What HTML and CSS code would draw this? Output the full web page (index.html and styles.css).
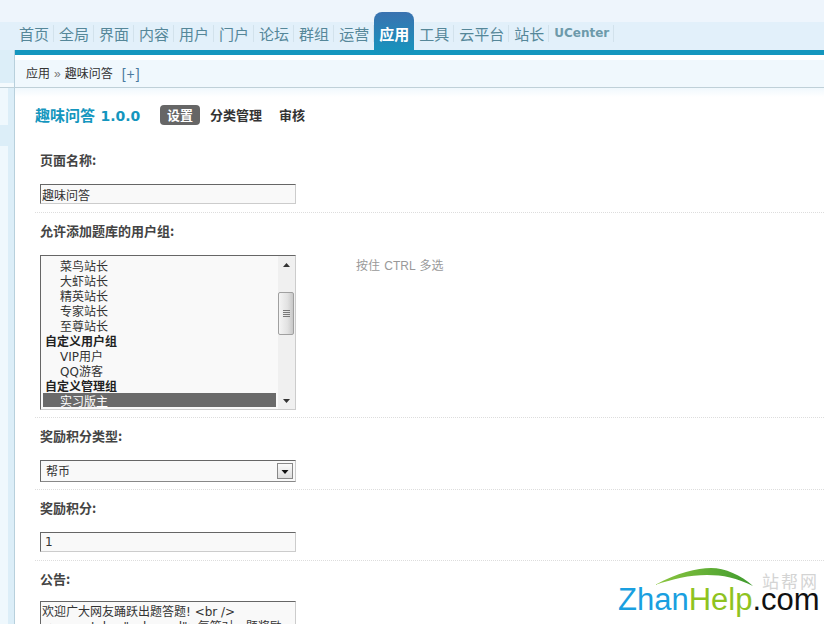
FILE: index.html
```html
<!DOCTYPE html>
<html lang="zh-CN">
<head>
<meta charset="utf-8">
<title>趣味问答</title>
<link rel="stylesheet" href="styles.css">
</head>
<body>
<header class="header">
  <ul class="nav">
    <li class="nav-item">首页</li>
    <li class="nav-item">全局</li>
    <li class="nav-item">界面</li>
    <li class="nav-item">内容</li>
    <li class="nav-item">用户</li>
    <li class="nav-item">门户</li>
    <li class="nav-item">论坛</li>
    <li class="nav-item">群组</li>
    <li class="nav-item">运营</li>
    <li class="nav-item nav-active">应用</li>
    <li class="nav-item">工具</li>
    <li class="nav-item">云平台</li>
    <li class="nav-item">站长</li>
    <li class="nav-item nav-latin">UCenter</li>
  </ul>
</header>
<div class="body-wrap">
  <aside class="side">
    <div class="side-a"></div>
    <div class="side-b"></div>
    <div class="side-line"></div>
    <div class="side-c"></div>
    <div class="side-d"></div>
    <div class="side-e"></div>
  </aside>
  <div class="main">
    <div class="bar"></div>
    <div class="crumb">
      <span>应用</span><span class="crumb-sep">»</span><span>趣味问答</span><span class="crumb-add">[+]</span>
    </div>
    <div class="fade"></div>
    <div class="title-row">
      <h1 class="title">趣味问答 <span class="version">1.0.0</span></h1>
      <div class="tabs">
        <span class="tab tab-on">设置</span>
        <span class="tab">分类管理</span>
        <span class="tab">审核</span>
      </div>
    </div>
    <form class="form">
      <div class="row">
        <div class="label">页面名称:</div>
        <input class="field" type="text" value="趣味问答">
      </div>
      <div class="row row-tight">
        <div class="label">允许添加题库的用户组:</div>
        <div class="with-hint">
          <div class="listbox">
            <div class="options">
              <div class="opt">菜鸟站长</div>
              <div class="opt">大虾站长</div>
              <div class="opt">精英站长</div>
              <div class="opt">专家站长</div>
              <div class="opt">至尊站长</div>
              <div class="group">自定义用户组</div>
              <div class="opt opt-latin">VIP用户</div>
              <div class="opt opt-latin">QQ游客</div>
              <div class="group">自定义管理组</div>
              <div class="opt opt-on">实习版主</div>
            </div>
            <div class="scroll">
              <svg class="arrow" width="17" height="17" viewBox="0 0 17 17"><path d="M5 11h7L8.500 7z" fill="#333"/></svg>
              <div class="thumb"><svg width="9" height="9" viewBox="0 0 9 9"><path d="M1 1.500h7M1 3.500h7M1 5.500h7M1 7.500h7" stroke="#777" stroke-width="1"/></svg></div>
              <svg class="arrow arrow-down" width="17" height="17" viewBox="0 0 17 17"><path d="M5 7h7l-3.500 4z" fill="#333"/></svg>
            </div>
          </div>
          <div class="hint">按住 CTRL 多选</div>
        </div>
      </div>
      <div class="row row-tight">
        <div class="label">奖励积分类型:</div>
        <div class="dropdown">
          <span class="drop-text">帮币</span>
          <span class="drop-btn"><svg width="14" height="14" viewBox="0 0 14 14"><path d="M3.500 6h7L7 10z" fill="#111"/></svg></span>
        </div>
      </div>
      <div class="row">
        <div class="label">奖励积分:</div>
        <input class="field field-num" type="text" value="1">
      </div>
      <div class="row row-last">
        <div class="label">公告:</div>
        <textarea class="notice" rows="6">欢迎广大网友踊跃出题答题! &lt;br /&gt;
&lt;span style="color:red"&gt;每答对一题奖励</textarea>
      </div>
    </form>
  </div>
</div>
<div class="logo">
  <svg class="swoosh" width="100" height="19" viewBox="0 0 100 19">
    <defs><linearGradient id="sw" x1="0" x2="1" y1="0" y2="0"><stop offset="0" stop-color="#8CC63F"/><stop offset="1" stop-color="#3E9A2E"/></linearGradient></defs>
    <path d="M0 17C22 5 42 0 56 0c14 0 30 7 42 18C82 10 68 7 52 7 34 7 18 11 0 17z" fill="url(#sw)"/>
  </svg>
  <span class="logo-cn">站帮网</span>
  <div class="logo-text"><span class="lg-blue">Zhan</span><span class="lg-green">Help</span><span class="lg-black">.com</span></div>
</div>
</body>
</html>
```
FILE: styles.css
```css
* { box-sizing: border-box; }
html, body { margin: 0; height: 624px; overflow: hidden; background: #fff; }
body { font: 12px/15px "Liberation Sans", "Noto Sans CJK SC", sans-serif; color: #333; position: relative; }

.header { height: 50px; padding-top: 22px; background: linear-gradient(#eef5fc 0, #eef5fc 22px, #e2f0fa 22px); }
.nav { display: flex; margin: 0; padding: 3px 0 0 14px; list-style: none; position: relative; z-index: 2; }
.nav-item { height: 17px; padding: 0 4px 0 5px; border-right: 1px solid #d2e2ec; font: 15px/17px "Noto Sans CJK SC", sans-serif; color: #558799; }
.nav-latin { padding-right: 4px; font: bold 12px/17px "DejaVu Sans", sans-serif; color: #6d9aaa; }
.nav-active { height: 43px; margin-top: -13px; padding: 13px 5px 0; border: 0; border-radius: 8px 8px 0 0; background: linear-gradient(#3a72b0, #1496be); color: #fff; font-weight: 700; }

.body-wrap { display: flex; height: 574px; }
.side { width: 15px; flex: none; display: flex; flex-direction: column; background: #dceef8; border-right: 1px solid #b8d0dc; }
.side-a { height: 33px; }
.side-b { height: 4px; background: #f4fafd; }
.side-line { height: 1px; background: #bfd0d8; }
.side-c { height: 37px; width: 8px; background: #eff8fd; }
.side-d { height: 21px; }
.side-e { flex: 1; width: 8px; background: #eff8fd; }

.main { flex: 1; min-width: 0; }
.bar { height: 5px; background: #1496be; }
.crumb { height: 33px; padding: 7px 0 0 11px; display: flex; align-items: center; color: #333; background: linear-gradient(#fff 0, #fff 5px, #f0f8fd 5px); border-bottom: 1px solid #bfd0d8; }
.crumb-sep { margin: 0 4px; color: #777; }
.crumb-add { margin-left: 9px; color: #4a7aa0; letter-spacing: 1px; font-size: 14px; }
.fade { height: 9px; background: linear-gradient(#f0f8fd, #fff); }

.title-row { display: flex; align-items: center; height: 20px; margin: 8px 0 0 20px; }
.title { margin: 0; width: 125px; font: bold 15px/20px "Noto Sans CJK SC", sans-serif; color: #1496be; white-space: nowrap; }
.version { margin-left: 2px; font: bold 14px/20px "DejaVu Sans", sans-serif; }
.tabs { display: flex; gap: 3px; }
.tab { height: 20px; padding: 0 7px; font: bold 13px/20px "Noto Sans CJK SC", sans-serif; color: #333; border-radius: 4px; }
.tab-on { background: #666; color: #fff; }

.form { margin: 25px 0 0 20px; }
.row { padding: 0 0 8px 5px; margin-bottom: 8px; border-bottom: 1px dotted #ddd; }
.row-tight { padding-bottom: 7px; }
.row-last { border: 0; margin: 0; }
.label { height: 20px; margin-bottom: 14px; font: bold 13px/20px "Noto Sans CJK SC", sans-serif; color: #444; }
.field { display: block; width: 256px; height: 20px; margin: 0; padding: 0 1px; background: #f9f9f9; border: 1px solid #ccc; border-color: #666 #ccc #ccc #666; outline: 0; font: 12px/18px "Noto Sans CJK SC", sans-serif; color: #333; border-radius: 0; }
.field-num { padding-left: 4px; font-family: "DejaVu Sans", sans-serif; }

.with-hint { display: flex; gap: 60px; }
.listbox { display: flex; width: 256px; height: 155px; background: #f9f9f9; border: 1px solid #ccc; border-color: #666 #ccc #ccc #666; }
.options { flex: 1; min-width: 0; height: 148px; margin-top: 3px; padding-left: 2px; overflow: hidden; }
.opt { height: 15px; padding: 1px 0 0 17px; line-height: 15px; }
.opt-latin { font-family: "DejaVu Sans", "Noto Sans CJK SC", sans-serif; }
.group { height: 15px; padding: 1px 0 0 2px; font-weight: 700; color: #222; line-height: 15px; }
.opt-on { width: 233px; height: 14px; margin-top: -1px; padding-top: 2px; background: #6a6a6a; color: #fff; overflow: hidden; }
.scroll { position: relative; width: 17px; flex: none; display: flex; flex-direction: column; background: #f0f0f0; }
.arrow { display: block; flex: none; }
.arrow-down { margin-top: auto; }
.thumb { width: 16px; height: 43px; margin: 19px 0 0 0; display: flex; align-items: center; justify-content: center; background: linear-gradient(90deg, #f4f4f4, #e2e2e2 60%, #c8c8c8); border: 1px solid #a0a0a0; border-radius: 2px; }
.thumb svg { display: block; }
.hint { padding-top: 4px; color: #999; word-spacing: 1px; }

.dropdown { display: flex; align-items: center; justify-content: space-between; width: 256px; height: 22px; padding: 0 2px 0 5px; background: #f9f9f9; border: 1px solid #ccc; border-color: #666 #ccc #888 #666; }
.drop-text { padding-top: 2px; }
.drop-btn { display: flex; width: 16px; height: 16px; align-items: center; justify-content: center; background: linear-gradient(#fafafa, #dedede); border: 1px solid #888; }

.notice { display: block; width: 256px; height: 120px; margin: -2px 0 0; padding: 3px 1px 1px; background: #f9f9f9; border: 1px solid #ccc; border-color: #666 #ccc #ccc #666; outline: 0; resize: none; overflow: hidden; font: 12px/15px "DejaVu Sans", "Noto Sans CJK SC", sans-serif; color: #333; }

.logo { position: absolute; left: 618px; top: 566px; width: 206px; height: 58px; }
.swoosh { position: absolute; left: 37px; top: 2px; }
.logo-cn { position: absolute; left: 144px; top: 6px; font: 17px/17px "Noto Sans CJK SC", sans-serif; letter-spacing: 2px; color: #d4d4d4; }
.logo-text { position: absolute; left: 0; top: 22px; font: 31px/24px "Liberation Sans", sans-serif; white-space: nowrap; }
.lg-blue { color: #1a9fe0; }
.lg-green { color: #8fc31f; }
.lg-black { color: #111; }
```
